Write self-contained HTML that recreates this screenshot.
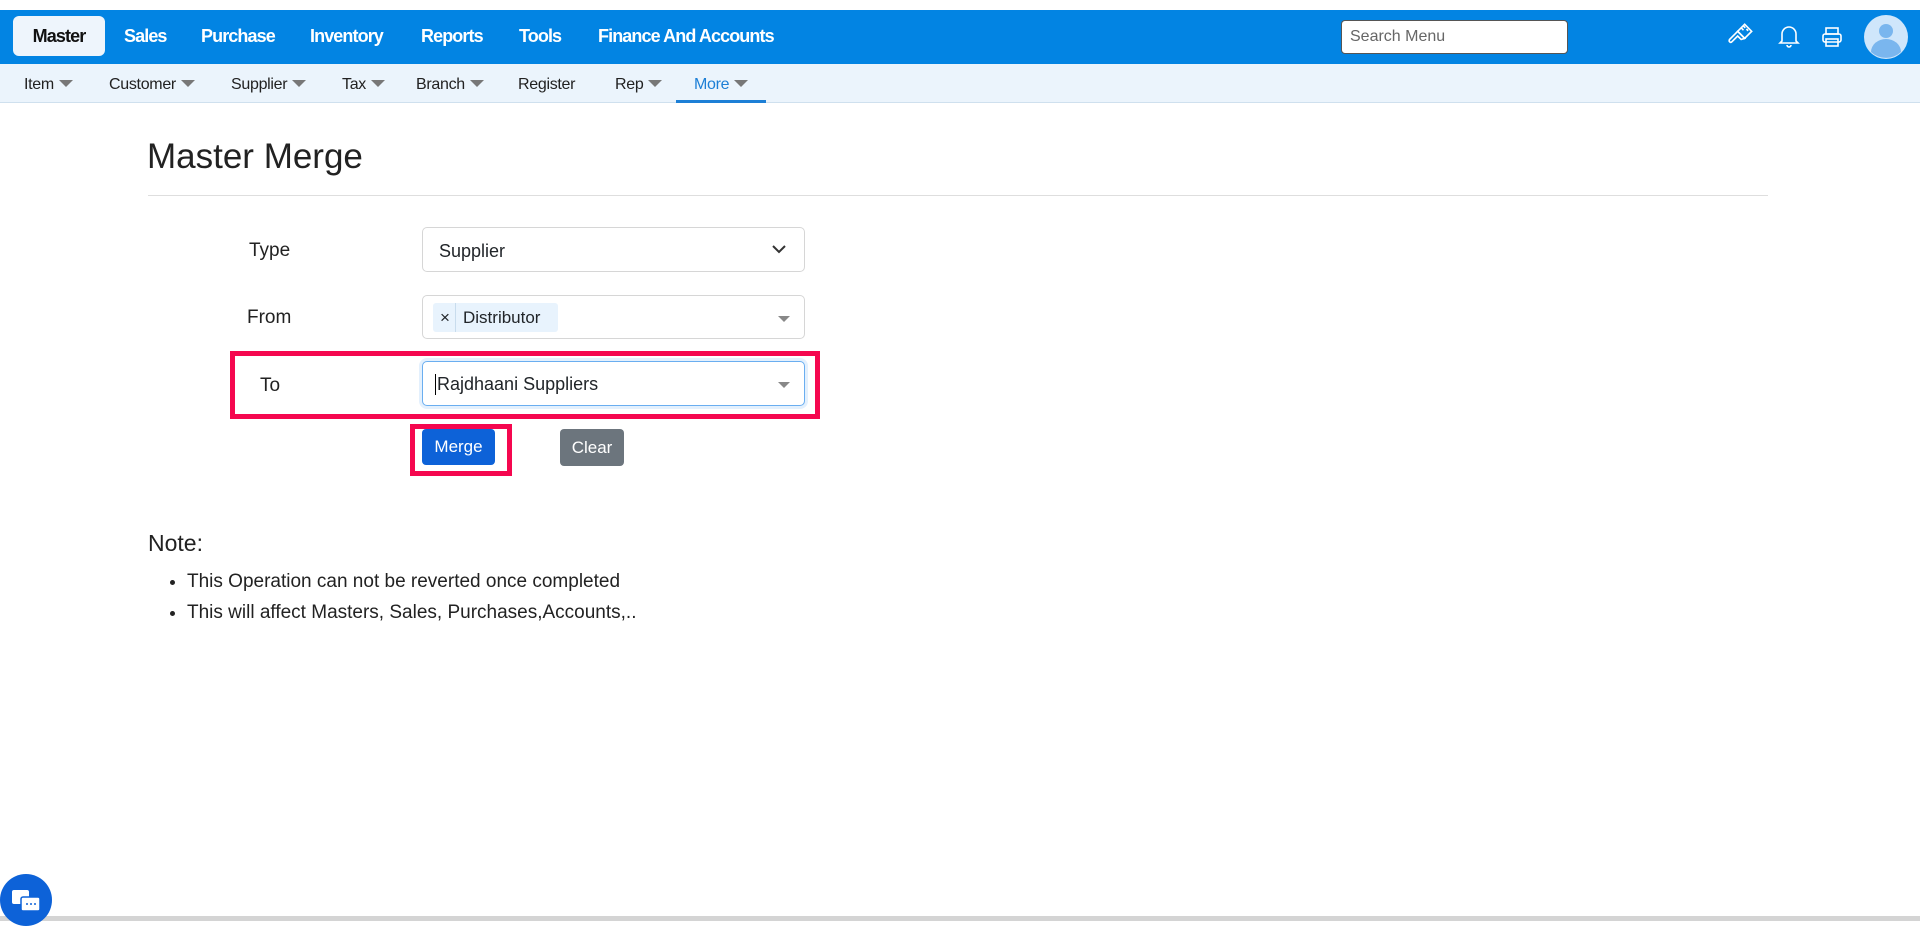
<!DOCTYPE html>
<html><head><meta charset="utf-8">
<style>
*{box-sizing:border-box;margin:0;padding:0}
body{width:1920px;height:921px;overflow:hidden;background:#fff;font-family:"Liberation Sans",sans-serif;color:#212529;position:relative}
.top{position:absolute;left:0;top:10px;width:1920px;height:54px;background:#0284e3}
.nav{position:absolute;top:26px;color:#fff;font-weight:bold;font-size:18px;letter-spacing:-0.9px}
.master{position:absolute;left:13px;top:16px;width:92px;height:40px;background:#eef5fc;border-radius:6px;color:#111;font-weight:bold;font-size:18px;letter-spacing:-0.9px;text-align:center;line-height:40px}
.search{position:absolute;left:1341px;top:20px;width:227px;height:34px;background:#fff;border:1px solid #555;border-radius:4px;font-size:16px;color:#666;padding-left:8px;line-height:32px}
.sub{position:absolute;left:0;top:64px;width:1920px;height:39px;background:#ebf4fc;border-bottom:1px solid #cfe0ee}
.si{position:absolute;top:76px;font-size:16px;color:#222;letter-spacing:-0.3px}
.car{display:inline-block;width:0;height:0;border-left:7px solid transparent;border-right:7px solid transparent;border-top:7px solid #777;margin-left:5px;vertical-align:2px}
.lbl{position:absolute;font-size:19px;color:#222}
.sel{position:absolute;left:422px;width:383px;height:45px;border:1px solid #d6d6d6;border-radius:5px;background:#fff;font-size:18px}
.tri{position:absolute;right:14px;top:20px;border-left:6px solid transparent;border-right:6px solid transparent;border-top:6px solid #888}
li{margin-bottom:9px}
</style></head><body>
<div class="top"></div>
<div class="master">Master</div>
<div class="nav" style="left:124px">Sales</div>
<div class="nav" style="left:201px">Purchase</div>
<div class="nav" style="left:310px">Inventory</div>
<div class="nav" style="left:421px">Reports</div>
<div class="nav" style="left:519px">Tools</div>
<div class="nav" style="left:598px">Finance And Accounts</div>
<div class="search">Search Menu</div>
<svg style="position:absolute;left:1726px;top:22px" width="28" height="28" viewBox="0 0 24 24" fill="none" stroke="#fff" stroke-width="1.4"><path d="M10 8l6-6 6 6-6 6z"/><path d="M13 5l2 2M15 3.5l1.5 1.5M17.5 6l1.5 1.5"/><path d="M10 8l6 6-3 1-3 -3-5 5c-1 1-3 0-2-2l5-5z"/></svg>
<svg style="position:absolute;left:1777px;top:23px" width="24" height="26" viewBox="0 0 24 26" fill="none" stroke="#fff" stroke-width="1.6"><path d="M5 18V11a7 7 0 0 1 14 0v7l2 2H3z"/><path d="M10 22a2 2 0 0 0 4 0"/></svg>
<svg style="position:absolute;left:1820px;top:25px" width="24" height="24" viewBox="0 0 24 24" fill="none" stroke="#fff" stroke-width="1.6"><rect x="6" y="3" width="12" height="6"/><rect x="3" y="9" width="18" height="8" rx="2"/><rect x="6" y="14" width="12" height="7"/></svg>
<svg style="position:absolute;left:1864px;top:15px" width="44" height="44" viewBox="0 0 44 44"><circle cx="22" cy="22" r="22" fill="#cfe6fb"/><circle cx="22" cy="16" r="7" fill="#7ab6ee"/><path d="M7 37a15 13 0 0 1 30 0a22 22 0 0 1-30 0z" fill="#7ab6ee"/></svg>
<div class="sub"></div>
<div class="si" style="left:24px">Item<span class="car"></span></div>
<div class="si" style="left:109px">Customer<span class="car"></span></div>
<div class="si" style="left:231px">Supplier<span class="car"></span></div>
<div class="si" style="left:342px">Tax<span class="car"></span></div>
<div class="si" style="left:416px">Branch<span class="car"></span></div>
<div class="si" style="left:518px">Register</div>
<div class="si" style="left:615px">Rep<span class="car"></span></div>
<div class="si" style="left:694px;color:#1c7fd6">More<span class="car"></span></div>
<div style="position:absolute;left:676px;top:100px;width:90px;height:3px;background:#1c7fd6"></div>

<div style="position:absolute;left:147px;top:137px;font-size:35px;color:#222">Master Merge</div>
<div style="position:absolute;left:148px;top:195px;width:1620px;height:1px;background:#dedede"></div>

<div class="lbl" style="left:249px;top:240px">Type</div>
<div class="sel" style="top:227px"><span style="position:absolute;left:16px;top:13px">Supplier</span>
<svg style="position:absolute;right:18px;top:17px" width="14" height="9" viewBox="0 0 14 9" fill="none" stroke="#333" stroke-width="2"><path d="M1 1l6 6 6-6"/></svg></div>

<div class="lbl" style="left:247px;top:307px">From</div>
<div class="sel" style="top:295px;height:44px"><div style="position:absolute;left:10px;top:7px;height:29px;width:125px;background:#e8f3fd;border-radius:3px;font-size:17px"><span style="position:absolute;left:7px;top:5px">×</span><span style="position:absolute;left:22px;top:0;width:1px;height:29px;background:#c8dced"></span><span style="position:absolute;left:30px;top:5px">Distributor</span></div><span class="tri"></span></div>

<div style="position:absolute;left:230px;top:351px;width:590px;height:68px;border:5px solid #f5074f"></div>
<div class="lbl" style="left:260px;top:375px">To</div>
<div class="sel" style="top:361px;height:45px;border-color:#6aaef0;box-shadow:0 0 0 3px #e3f0fd"><span style="position:absolute;left:12px;top:12px;border-left:1.5px solid #000;padding-left:1px">Rajdhaani Suppliers</span><span class="tri"></span></div>

<div style="position:absolute;left:410px;top:424px;width:102px;height:52px;border:5px solid #f5074f"></div>
<div style="position:absolute;left:422px;top:429px;width:73px;height:36px;background:#0d62d8;border-radius:4px;color:#fff;font-size:17px;text-align:center;line-height:36px">Merge</div>
<div style="position:absolute;left:560px;top:429px;width:64px;height:37px;background:#6c757d;border-radius:4px;color:#fff;font-size:17px;text-align:center;line-height:37px">Clear</div>

<div style="position:absolute;left:148px;top:530px;font-size:23px;color:#222">Note:</div>
<ul style="position:absolute;left:187px;top:571px;font-size:19px;color:#222">
<li>This Operation can not be reverted once completed</li>
<li>This will affect Masters, Sales, Purchases,Accounts,..</li>
</ul>

<div style="position:absolute;left:0;top:916px;width:1920px;height:5px;background:#d4d4d4"></div>
<svg style="position:absolute;left:0;top:874px" width="52" height="52" viewBox="0 0 52 52"><circle cx="26" cy="26" r="26" fill="#0d62d8"/><rect x="12" y="16" width="17" height="14" rx="2" fill="#fff"/><rect x="21" y="23" width="19" height="14" rx="2" fill="#fff" stroke="#0d62d8" stroke-width="1.5"/><circle cx="27" cy="30" r="1" fill="#0d62d8"/><circle cx="31" cy="30" r="1" fill="#0d62d8"/><circle cx="35" cy="30" r="1" fill="#0d62d8"/></svg>
</body></html>
